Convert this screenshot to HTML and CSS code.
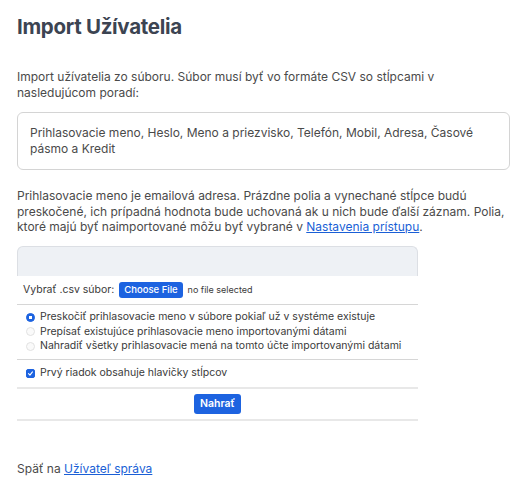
FILE: index.html
```html
<!DOCTYPE html>
<html lang="sk">
<head>
<meta charset="utf-8">
<title>Import Užívatelia</title>
<link rel="stylesheet" href="styles.css">
</head>
<body>
<main class="page">
  <h1 class="title">Import Užívatelia</h1>
  <p class="intro">Import užívatelia zo súboru. Súbor musí byť vo formáte CSV so stĺpcami v nasledujúcom poradí:</p>
  <div class="columns">Prihlasovacie meno, Heslo, Meno a priezvisko, Telefón, Mobil, Adresa, Časové pásmo a Kredit</div>
  <p class="note">Prihlasovacie meno je emailová adresa. Prázdne polia a vynechané stĺpce budú preskočené, ich prípadná hodnota bude uchovaná ak u nich bude ďalší záznam. Polia, ktoré majú byť naimportované môžu byť vybrané v <a href="#" class="link">Nastavenia prístupu</a>.</p>

  <form class="import">
    <div class="import-head"></div>
    <div class="row row-file">
      <span class="label">Vybrať .csv súbor:</span>
      <button type="button" class="btn btn-file">Choose File</button>
      <span class="nofile">no file selected</span>
    </div>
    <div class="row row-radios">
      <label class="opt"><input type="radio" name="mode" class="radio" checked> Preskočiť prihlasovacie meno v súbore pokiaľ už v systéme existuje</label>
      <label class="opt"><input type="radio" name="mode" class="radio"> Prepísať existujúce prihlasovacie meno importovanými dátami</label>
      <label class="opt"><input type="radio" name="mode" class="radio"> Nahradiť všetky prihlasovacie mená na tomto účte importovanými dátami</label>
    </div>
    <div class="row row-check">
      <label class="opt"><input type="checkbox" class="check" checked> Prvý riadok obsahuje hlavičky stĺpcov</label>
    </div>
    <div class="row row-submit">
      <button type="button" class="btn btn-submit">Nahrať</button>
    </div>
  </form>

  <p class="back">Späť na <a href="#" class="link">Užívateľ správa</a></p>
</main>
</body>
</html>
```

FILE: styles.css
```css
html, body {
  margin: 0;
  padding: 0;
  background: #ffffff;
}

body {
  font-family: Inter, "Noto Sans", "Liberation Sans", sans-serif;
  color: #4a4a4a;
  font-size: 12px;
  line-height: 15.6px;
}

.page {
  padding: 14px 13px 20px 17px;
}

.title {
  margin: 0;
  font-size: 20.5px;
  line-height: 26px;
  font-weight: 700;
  color: #3c4452;
  letter-spacing: -0.3px;
}

.intro {
  margin: 29px 0 0;
}

.columns {
  margin-top: 12px;
  border: 1px solid #d4d4d4;
  border-radius: 6px;
  padding: 12px;
  line-height: 16px;
}

.note {
  margin: 18px 0 0;
}

.link {
  color: #1a5fd6;
  text-decoration: underline;
}

.import {
  width: 401px;
  margin-top: 11px;
  font-size: 10.5px;
  line-height: 14.5px;
  color: #3a3a3a;
}

.import-head {
  height: 29px;
  background: #eef1f5;
  border: 1px solid #dcdfe4;
  border-bottom: none;
  border-radius: 6px 6px 0 0;
}

.row {
  display: flex;
  align-items: center;
  border-bottom: 1px solid #d6d6d6;
}

.row-file {
  height: 28px;
  padding-left: 6px;
  gap: 5px;
}

.label {
  color: #3a3a3a;
}

.btn {
  font-family: inherit;
  border: none;
  color: #ffffff;
  background: #1d63e0;
  border-radius: 3px;
  cursor: pointer;
}

.btn-file {
  height: 16px;
  padding: 0 5px;
  font-size: 9.5px;
  font-weight: 500;
  line-height: 16px;
}

.nofile {
  font-size: 9px;
  color: #3a3a3a;
}

.row-radios {
  flex-direction: column;
  align-items: flex-start;
  justify-content: center;
  padding: 0 0 0 8px;
  height: 54px;
}

.opt {
  display: flex;
  align-items: center;
  gap: 4px;
}

.radio, .check {
  appearance: none;
  -webkit-appearance: none;
  margin: 0 1px;
  width: 9px;
  height: 9px;
  flex: none;
  background: #fafafa;
  border: 1px solid #e2e2e2;
}

.radio {
  border-radius: 50%;
}

.radio:checked {
  background: #1d63e0 radial-gradient(circle, #ffffff 0 1.6px, transparent 2px);
  border-color: #1d63e0;
}

.check {
  border-radius: 2px;
}

.check:checked {
  background: #1d63e0;
  border-color: #1d63e0;
  background-image: url("data:image/svg+xml;utf8,<svg xmlns='http://www.w3.org/2000/svg' viewBox='0 0 10 10'><path d='M2.2 5.2 L4.2 7.2 L7.8 2.8' fill='none' stroke='white' stroke-width='1.6' stroke-linecap='round' stroke-linejoin='round'/></svg>");
  background-size: 100% 100%;
}

.row-check {
  height: 27px;
  padding-left: 8px;
  border-bottom: 2px solid #e8e8e8;
}

.row-submit {
  height: 30px;
  justify-content: center;
  border-bottom: 2px solid #e8e8e8;
}

.btn-submit {
  height: 20px;
  padding: 0 6px;
  font-size: 10.5px;
  font-weight: 600;
  line-height: 20px;
}

.back {
  margin: 40px 0 0;
}
```
